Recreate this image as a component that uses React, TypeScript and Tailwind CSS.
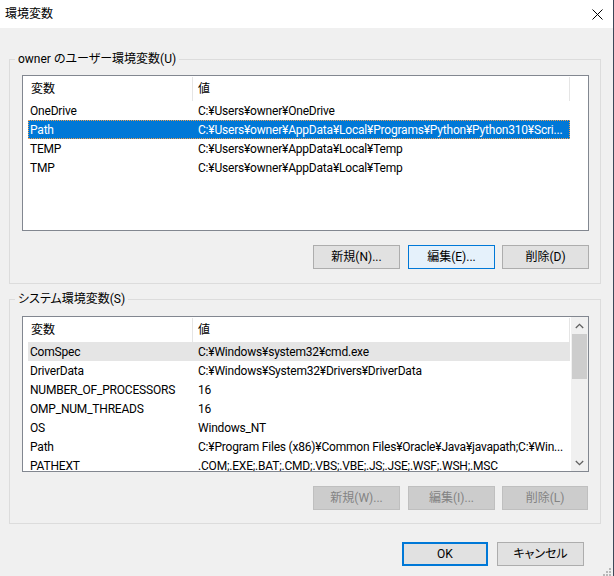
import React from "react";

type Row = { name: string; value: string; selected?: boolean; hover?: boolean };

const userVars: Row[] = [
  { name: "OneDrive", value: "C:¥Users¥owner¥OneDrive" },
  {
    name: "Path",
    value: "C:¥Users¥owner¥AppData¥Local¥Programs¥Python¥Python310¥Scri...",
    selected: true,
  },
  { name: "TEMP", value: "C:¥Users¥owner¥AppData¥Local¥Temp" },
  { name: "TMP", value: "C:¥Users¥owner¥AppData¥Local¥Temp" },
];

const systemVars: Row[] = [
  { name: "ComSpec", value: "C:¥Windows¥system32¥cmd.exe", hover: true },
  { name: "DriverData", value: "C:¥Windows¥System32¥Drivers¥DriverData" },
  { name: "NUMBER_OF_PROCESSORS", value: "16" },
  { name: "OMP_NUM_THREADS", value: "16" },
  { name: "OS", value: "Windows_NT" },
  {
    name: "Path",
    value: "C:¥Program Files (x86)¥Common Files¥Oracle¥Java¥javapath;C:¥Win...",
  },
  { name: "PATHEXT", value: ".COM;.EXE;.BAT;.CMD;.VBS;.VBE;.JS;.JSE;.WSF;.WSH;.MSC" },
];

const Header: React.FC = () => (
  <div className="flex h-[25px] shrink-0">
    <div className="w-[169px] pl-[8px] flex items-center">変数</div>
    <div className="w-px bg-[#e5e5e5] mt-[1px]" />
    <div className="w-[376px] pl-[5px] flex items-center">値</div>
    <div className="w-px bg-[#e5e5e5] mt-[1px]" />
  </div>
);

const VarRow: React.FC<{ row: Row }> = ({ row }) => {
  let tone = "";
  if (row.selected)
    tone =
      "bg-[#0078d7] text-white outline outline-1 outline-dotted outline-[#f0a050] -outline-offset-1";
  else if (row.hover) tone = "bg-[#e5e5e5]";
  return (
    <div className={`flex h-[19px] shrink-0 ml-[5px] w-[542px] items-center tracking-[-0.2px] ${tone}`}>
      <div className="w-[165px] pl-[2px] whitespace-nowrap overflow-hidden">{row.name}</div>
      <div className="flex-1 pl-[5px] whitespace-nowrap overflow-hidden">{row.value}</div>
    </div>
  );
};

const Btn: React.FC<{ label: string; kind?: "normal" | "focus" | "disabled" | "default"; className?: string }> = ({
  label,
  kind = "normal",
  className = "",
}) => {
  const look =
    kind === "focus"
      ? "bg-[#e5f1fb] border border-[#0078d7] text-black"
      : kind === "disabled"
      ? "bg-[#cccccc] border border-[#bfbfbf] text-[#838383]"
      : kind === "default"
      ? "bg-[#e1e1e1] border-2 border-[#0078d7] text-black"
      : "bg-[#e1e1e1] border border-[#adadad] text-black";
  return (
    <button className={`h-[24px] flex items-center justify-center ${look} ${className}`}>{label}</button>
  );
};

const Chevron: React.FC<{ down?: boolean }> = ({ down }) => (
  <svg width="9" height="6" viewBox="0 0 9 6" className={down ? "rotate-180" : ""}>
    <path d="M0.8 5 L4.5 1.3 L8.2 5" fill="none" stroke="#606060" strokeWidth="1.3" />
  </svg>
);

export default function App() {
  return (
    <div className="relative w-[614px] h-[576px] bg-[#f0f0f0] border-r border-[#3c4858] flex flex-col text-[12px] leading-[16px] text-black font-['Roboto','Noto_Sans_CJK_JP',sans-serif] [font-feature-settings:'palt'] overflow-hidden">
      {/* title bar */}
      <div className="h-[28px] shrink-0 bg-white flex items-center justify-between pl-[5px] pr-[10px]">
        <span>環境変数</span>
        <svg width="11" height="11" viewBox="0 0 11 11">
          <path d="M0.5 0.5 L10.5 10.5 M10.5 0.5 L0.5 10.5" stroke="#000" strokeWidth="1" />
        </svg>
      </div>

      {/* user variables */}
      <fieldset className="ml-[9px] mt-[23px] w-[592px] border border-[#dcdcdc] pl-[12px] pr-[11px] pt-[8px] pb-[14px]">
        <legend className="ml-[-7px] px-[3px] leading-[16px]">owner のユーザー環境変数(U)</legend>
        <div className="h-[156px] border border-[#828790] bg-white flex flex-col overflow-hidden">
          <Header />
          {userVars.map((r) => (
            <VarRow key={r.name} row={r} />
          ))}
        </div>
        <div className="flex justify-end mt-[14px]">
          <Btn label="新規(N)..." className="w-[87px]" />
          <Btn label="編集(E)..." kind="focus" className="w-[87px] ml-[8px]" />
          <Btn label="削除(D)" className="w-[87px] ml-[7px]" />
        </div>
      </fieldset>

      {/* system variables */}
      <fieldset className="ml-[9px] mt-[7px] w-[592px] border border-[#dcdcdc] pl-[12px] pr-[11px] pt-[9px] pb-[13px]">
        <legend className="ml-[-7px] px-[3px] leading-[16px]">システム環境変数(S)</legend>
        <div className="h-[156px] border border-[#828790] bg-white flex overflow-hidden">
          <div className="flex-1 flex flex-col overflow-hidden">
            <Header />
            {systemVars.map((r) => (
              <VarRow key={r.name} row={r} />
            ))}
          </div>
          <div className="w-[17px] shrink-0 bg-[#f0f0f0] flex flex-col">
            <div className="h-[17px] flex items-center justify-center">
              <Chevron />
            </div>
            <div className="h-[45px] mx-[1px] bg-[#cdcdcd]" />
            <div className="flex-1" />
            <div className="h-[17px] flex items-center justify-center">
              <Chevron down />
            </div>
          </div>
        </div>
        <div className="flex justify-end mt-[14px]">
          <Btn label="新規(W)..." kind="disabled" className="w-[87px]" />
          <Btn label="編集(I)..." kind="disabled" className="w-[87px] ml-[8px]" />
          <Btn label="削除(L)" kind="disabled" className="w-[86px] ml-[7px] mr-[1px]" />
        </div>
      </fieldset>

      {/* dialog buttons */}
      <div className="flex justify-end mt-[18px] pr-[29px]">
        <Btn label="OK" kind="default" className="w-[86px]" />
        <Btn label="キャンセル" className="w-[87px] ml-[9px]" />
      </div>

      {/* resize grip */}
      <svg width="10" height="10" viewBox="0 0 10 10" className="absolute right-[2px] bottom-[0px]">
        <rect x="8" y="2" width="2" height="2" fill="#b8b8b8" />
        <rect x="5" y="5" width="2" height="2" fill="#b8b8b8" />
        <rect x="8" y="5" width="2" height="2" fill="#b8b8b8" />
        <rect x="2" y="8" width="2" height="2" fill="#b8b8b8" />
        <rect x="5" y="8" width="2" height="2" fill="#b8b8b8" />
        <rect x="8" y="8" width="2" height="2" fill="#b8b8b8" />
      </svg>
    </div>
  );
}
